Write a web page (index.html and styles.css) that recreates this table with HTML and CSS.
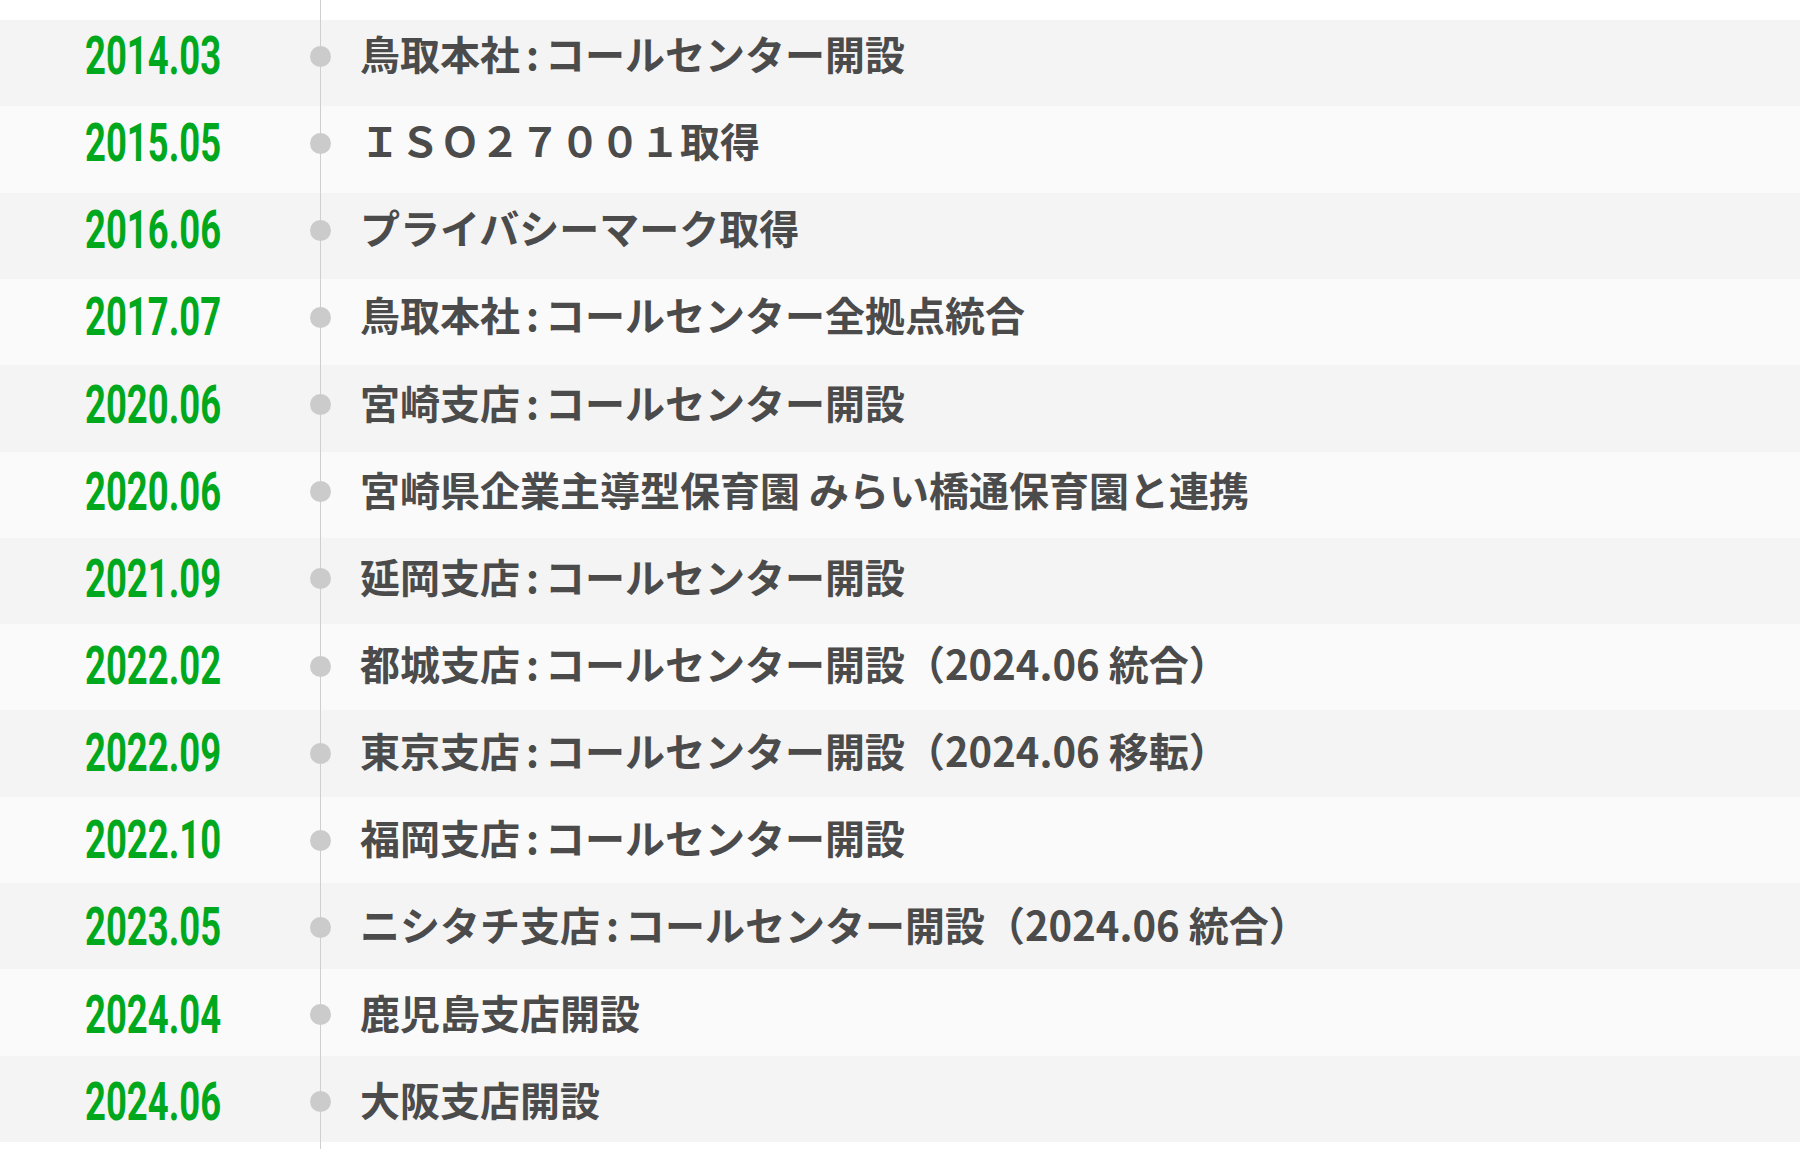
FILE: index.html
```html
<!DOCTYPE html>
<html lang="ja">
<head>
<meta charset="utf-8">
<title>沿革</title>
<link rel="stylesheet" href="styles.css">
</head>
<body>
<section class="history">
  <ol class="timeline">
    <li class="event"><time class="date">2014.03</time><span class="dot"></span><p class="title">鳥取本社<span class="sep">:</span>コールセンター開設</p></li>
    <li class="event"><time class="date">2015.05</time><span class="dot"></span><p class="title">ＩＳＯ２７００１取得</p></li>
    <li class="event"><time class="date">2016.06</time><span class="dot"></span><p class="title">プライバシーマーク取得</p></li>
    <li class="event"><time class="date">2017.07</time><span class="dot"></span><p class="title">鳥取本社<span class="sep">:</span>コールセンター全拠点統合</p></li>
    <li class="event"><time class="date">2020.06</time><span class="dot"></span><p class="title">宮崎支店<span class="sep">:</span>コールセンター開設</p></li>
    <li class="event"><time class="date">2020.06</time><span class="dot"></span><p class="title">宮崎県企業主導型保育園 みらい橋通保育園と連携</p></li>
    <li class="event"><time class="date">2021.09</time><span class="dot"></span><p class="title">延岡支店<span class="sep">:</span>コールセンター開設</p></li>
    <li class="event"><time class="date">2022.02</time><span class="dot"></span><p class="title">都城支店<span class="sep">:</span>コールセンター開設（2024.06 統合）</p></li>
    <li class="event"><time class="date">2022.09</time><span class="dot"></span><p class="title">東京支店<span class="sep">:</span>コールセンター開設（2024.06 移転）</p></li>
    <li class="event"><time class="date">2022.10</time><span class="dot"></span><p class="title">福岡支店<span class="sep">:</span>コールセンター開設</p></li>
    <li class="event"><time class="date">2023.05</time><span class="dot"></span><p class="title">ニシタチ支店<span class="sep">:</span>コールセンター開設（2024.06 統合）</p></li>
    <li class="event"><time class="date">2024.04</time><span class="dot"></span><p class="title">鹿児島支店開設</p></li>
    <li class="event"><time class="date">2024.06</time><span class="dot"></span><p class="title">大阪支店開設</p></li>
  </ol>
</section>
</body>
</html>
```
FILE: styles.css
```css
html, body {
  margin: 0;
  padding: 0;
  background: #fff;
}

.history {
  position: relative;
  box-sizing: border-box;
  height: 1149px;
  padding: 19.5px 0 7.5px;
  background-image: repeating-linear-gradient(to bottom,
    #f4f4f4 0, #f4f4f4 86.3px,
    #fafafa 86.3px, #fafafa 172.6px);
  background-origin: content-box;
  background-clip: content-box;
  overflow: hidden;
}

.history::before {
  content: "";
  position: absolute;
  left: 320px;
  top: 0;
  bottom: 0;
  width: 1px;
  background: #cfcfcf;
}

.timeline {
  list-style: none;
  margin: -7px 0 0;
  padding: 0;
}

.event {
  display: grid;
  grid-template-columns: 310px 21px 1fr;
  align-items: center;
  height: 87.15px;
}

.date {
  display: inline-block;
  justify-self: start;
  margin-left: 85px;
  font-family: Roboto, "Liberation Sans", sans-serif;
  font-weight: 700;
  font-size: 54px;
  line-height: 54px;
  color: #00a81e;
  transform: scaleX(0.675);
  transform-origin: left center;
  white-space: nowrap;
}

.dot {
  position: relative;
  z-index: 1;
  width: 21px;
  height: 21px;
  border-radius: 50%;
  background: #cbcbcb;
}

.title {
  margin: 0 0 0 29px;
  position: relative;
  top: -3px;
  font-family: "Noto Sans CJK JP", "Noto Sans", sans-serif;
  font-weight: 700;
  font-size: 40px;
  line-height: 40px;
  color: #4b4b4b;
  white-space: nowrap;
}

.sep {
  margin: 0 6px;
}
```
